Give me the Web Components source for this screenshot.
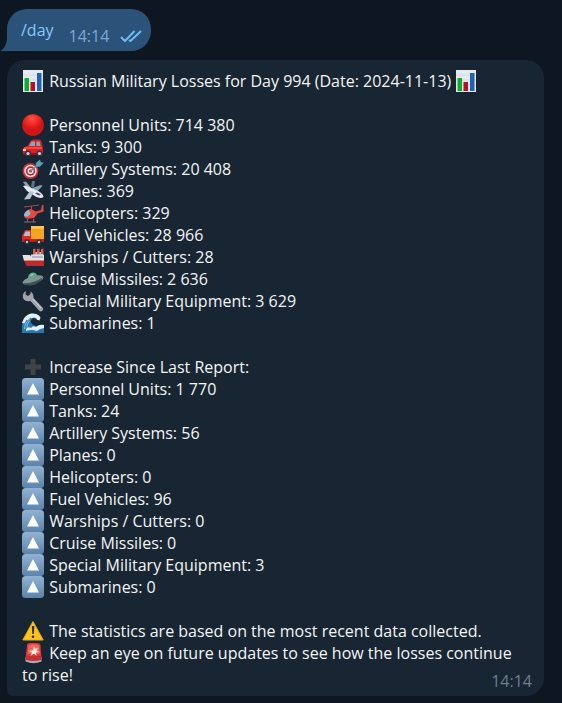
<!DOCTYPE html>
<html lang="en">
<head>
<meta charset="utf-8">
<title>Chat</title>
<style>
html { background: #0e1621; }
body { margin: 0; font-family: "Open Sans", "Noto Sans", sans-serif; font-size: 16px; line-height: 22px; color: #f5f5f5; }
</style>
</head>
<body>
<chat-view>
  <chat-bubble variant="out" time="14:14"><a href="#day">/day</a></chat-bubble>
  <chat-bubble variant="in" time="14:14"><loss-report></loss-report></chat-bubble>
</chat-view>
<script>
const ICONS = {
  chart: `<path fill="#e6e9f2" d="M1 0h20v22H1z"/><path stroke="#c3cbdc" stroke-width=".5" d="M1 5h20M1 10h20M1 15h20"/><path fill="#0cae2b" d="M2.5 8H7v13H2.5z"/><path fill="#b90e23" d="M8.5 12H13v9H8.5z"/><path fill="#1c63b5" d="M15 3h4.5v18H15z"/>`,
  circle: `<defs><radialGradient id="r" cx=".45" cy=".2"><stop stop-color="#ff5144"/><stop offset=".6" stop-color="#ef2722"/><stop offset="1" stop-color="#d41517"/></radialGradient></defs><circle cx="11" cy="11" r="10.8" fill="url(#r)"/>`,
  car: `<path fill="#de1e22" d="M.5 14q0-3 5-4l3-5q1-1.500 3-1.500h5q2.500 0 3 2l1 4.500.5 3v5H1z"/><path fill="#8aa5b8" d="M9.500 5.500H13v4.500H7zM14.500 5.500h3l1 4.500h-4z"/><path fill="#ff7668" d="M2 11.500h18v1H2z"/><path fill="#ffd0a8" d="M1 13h3v2H1z"/><path fill="#8f1219" d="M1 17h20v2H1z"/><circle cx="6" cy="17.500" r="3" fill="#303741"/><circle cx="17.500" cy="17.500" r="3" fill="#303741"/><circle cx="6" cy="17.500" r="1.600" fill="#cbd3d8"/><circle cx="17.500" cy="17.500" r="1.600" fill="#cbd3d8"/>`,
  target: `<circle cx="8.500" cy="13" r="8" fill="#ce2935"/><circle cx="8.500" cy="13" r="6.200" fill="#eee"/><circle cx="8.500" cy="13" r="4.700" fill="#c9222e"/><circle cx="8.500" cy="13" r="3" fill="#eee"/><circle cx="8.500" cy="13" r="1.500" fill="#c9222e"/><path stroke="#5c8c9c" stroke-width="1.600" d="M8.500 13L17 6"/><path fill="#4ba7bd" d="M13.500 5.500l4.500-4 .8 2.700 3 .6-4.200 4.200-3-.5z"/>`,
  plane: `<path fill="#8b9dae" d="M1 2l3-.5 5 6-2 3zM10 8l9-3 1.500 1-6 6z"/><path fill="#e4eaf0" d="M1 6q2-1 5 .5L14 10q7 3 7.500 7-3 2-8-.5L5 11z"/><path fill="#b8c4cf" d="M12 12l-4 7-6 .5 1-1.500 5-7z"/><path fill="#37506a" d="M15 12.500l4 2-2 1-4-2z"/><path fill="#5d7386" d="M10 1h3l-1 7-3-1z"/>`,
  helicopter: `<path stroke="#a84648" stroke-width="1" d="M2 5l15-2M9.500 4v4"/><path fill="#e9473f" d="M2 13q1-5 7-6l5 2.500 5-1.500 1-5h1.500v6.500l-6 2-3 4q-6 2-9.500.5z"/><path fill="#91bad0" d="M2 13q1-4 5-5l1.500 4-2.500 2.500-3.500 0z"/><path stroke="#9b6068" stroke-width="1" fill="none" d="M5.500 16.500V20M11.500 16.500V20M2 20h12"/>`,
  truck: `<path fill="#f2a51f" d="M9 2h13v14H9z"/><path fill="#ffc348" d="M9 2h13v3H9z"/><path fill="#dc2928" d="M3 6h6v12H0v-6z"/><path fill="#abc4cf" d="M3.500 7.500H8V12H1.500z"/><path fill="#c42022" d="M0 15h22v3H0z"/><circle cx="5" cy="18" r="2.600" fill="#292f35"/><circle cx="17" cy="18" r="2.600" fill="#292f35"/><circle cx="5" cy="18" r="1.200" fill="#bdc7ca"/><circle cx="17" cy="18" r="1.200" fill="#bdc7ca"/>`,
  ship: `<path fill="#dbe0e3" d="M9 8.500h13V15H9z"/><path fill="#b9c3c8" d="M11 6h10v3H11z"/><path fill="#d75a52" d="M11 2h2.500v6H11zM15 2h2.500v6H15zM19 2h2.500v6H19z"/><path fill="#262b34" d="M11 1h2.500v2H11zM15 1h2.500v2H15zM19 1h2.500v2H19z"/><path fill="#e7e3df" d="M.5 9H8l2 3.500h12V15H2z"/><path fill="#b92b30" d="M2 14.500h20V20H4.500z"/><path stroke="#6d7d88" stroke-width=".8" d="M10 11h11"/>`,
  ufo: `<ellipse cx="11" cy="12" rx="10.800" ry="4" transform="rotate(-16 11 12)" fill="#7f9290"/><path fill="#3b5352" d="M.8 15q11 1 20.400-6-3 5.500-9 8-8 1.500-11.400-2z"/><path fill="#59a888" d="M6 10q0-5 5-5.500 4 0 4 3.500-4 3-9 2z"/><path fill="#a2e3c4" d="M8 8q1-2.500 4-2.500-1 2-4 2.500z"/>`,
  wrench: `<path fill="#a0a3ac" d="M4 1L3.500 4.500 6 6l2.500-2V1.500q3.500 2 3 6.500l9 9.500q1.500 2-.5 3.500-1.500 1-3-.5L8.500 11Q3 12 1 8 0 3 4 1z"/><path stroke="#d6d7dd" fill="none" d="M10.500 9l8.500 9"/>`,
  wave: `<path fill="#2a78b4" d="M0 21V13Q2 4 8 2q7-1 9.500 4l-2 2-4-2q-3.500 1-2.500 5 3 4 13 3v7z"/><path fill="#e2f1f7" d="M0 11q2-8 9-9.500 7-.5 9.500 4l-1 3-2-.5q-1-3-4-2.500l-2 1-1-1-3 3-1-1-2 4zM4 17q2-3 5-1 2-3 5-1 3-3 8-2v3q-5 1-7 3-6-2-11 0z"/><path stroke="#86c4e1" fill="none" d="M2.500 17Q3 10 8 7M5 16q-.5-4 2.500-7"/>`,
  plus: `<path fill="#414246" d="M8.500 3h5v5.500H19v5h-5.500V19h-5v-5.500H3v-5h5.500z"/>`,
  up: `<defs><linearGradient id="b" x2="0" y2="1"><stop stop-color="#92b2d1"/><stop offset="1" stop-color="#5c83ac"/></linearGradient></defs><rect width="22" height="22" rx="3.500" fill="url(#b)"/><path fill="#fff" d="M11 5L17 16.500H5z"/>`,
  warning: `<path fill="#fbc51e" stroke="#eda913" stroke-linejoin="round" d="M11 1.500L21.200 20H.8z"/><path fill="#352e20" d="M9.800 6h2.500l-.5 8h-1.500z"/><circle cx="11" cy="16.700" r="1.300" fill="#352e20"/>`,
  siren: `<path fill="#d93a34" d="M3.500 16L5 3q0-2 3-2h7q3 0 3.500 2l1 13z"/><path fill="#f0625a" d="M6.500 3q5-1.500 10.500 0l1 9H5.500z"/><path fill="#fff0e8" d="M12 4l1 3 3.500-1.500-2 3.200 3 1.300-3.500.5.5 3.500-2.500-2.500L8.500 14l1.500-3.500L7 9l4-.8z"/><path fill="#a4b0b7" d="M3.500 15.500h16v4q-8 3.500-16 0z"/><path fill="#c92f31" d="M4 14h15v4q-7.500 2-15 0z"/>`
};

class EmojiIcon extends HTMLElement {
  connectedCallback() {
    this.attachShadow({ mode: 'open' }).innerHTML = `<style>
      :host { display: inline-block; width: 22px; height: 22px; margin-right: 1px; vertical-align: top; }
      svg { display: block; width: 100%; height: 100%; }
    </style><svg viewBox="0 0 22 22" fill="none" aria-hidden="true">${ICONS[this.getAttribute('name')]}</svg>`;
  }
}
customElements.define('emoji-icon', EmojiIcon);

class ChatView extends HTMLElement {
  constructor() {
    super();
    this.attachShadow({ mode: 'open' }).innerHTML = `<style>
      :host { display: flex; flex-direction: column; align-items: flex-start; gap: 9px; padding: 9px 18px 7px 7px; }
    </style><slot></slot>`;
  }
}
customElements.define('chat-view', ChatView);

class ChatBubble extends HTMLElement {
  connectedCallback() {
    const out = this.getAttribute('variant') === 'out';
    this.attachShadow({ mode: 'open' }).innerHTML = `<style>
      :host { display: block; position: relative; background: #182533; border-radius: 18px 18px 18px 6px; padding: 10px 15px; }
      :host([variant="out"]) { display: flex; gap: 15px; background: #2b5278; border-radius: 20px 20px 20px 0; padding: 10px 9px 10px 14px; }
      ::slotted(a) { color: #83caff; text-decoration: none; }
      time { position: absolute; right: 12px; bottom: 4px; color: #6d7f8f; }
      :host([variant="out"]) time { position: static; display: flex; align-items: center; gap: 11px; color: #7da8d3; padding-top: 12px; height: 10px; }
      .tail { position: absolute; left: -7px; bottom: 0; width: 7px; height: 12px; }
    </style><slot></slot><time>${this.getAttribute('time')}${out ? `<svg width="22" height="14" viewBox="0 0 22 14" fill="none" stroke="#6fb9f3" stroke-width="2" role="img" aria-label="Read"><path d="M1 8l4 4L14.500 2M9 11l1.500 1L21 2"/></svg>` : ''}</time>
    ${out ? `<svg class="tail" viewBox="0 0 7 12" aria-hidden="true"><path fill="#2b5278" d="M7 0v12H0q6-3 7-12z"/></svg>` : ''}`;
  }
}
customElements.define('chat-bubble', ChatBubble);

class LossReport extends HTMLElement {
  connectedCallback() {
    const row = ([icon, text]) => `<li><emoji-icon name="${icon}"></emoji-icon> ${text}</li>`;
    const totals = [['circle', 'Personnel Units: 714 380'], ['car', 'Tanks: 9 300'], ['target', 'Artillery Systems: 20 408'],
      ['plane', 'Planes: 369'], ['helicopter', 'Helicopters: 329'], ['truck', 'Fuel Vehicles: 28 966'], ['ship', 'Warships / Cutters: 28'],
      ['ufo', 'Cruise Missiles: 2 636'], ['wrench', 'Special Military Equipment: 3 629'], ['wave', 'Submarines: 1']];
    const gains = ['Personnel Units: 1 770', 'Tanks: 24', 'Artillery Systems: 56', 'Planes: 0', 'Helicopters: 0', 'Fuel Vehicles: 96',
      'Warships / Cutters: 0', 'Cruise Missiles: 0', 'Special Military Equipment: 3', 'Submarines: 0'].map(t => ['up', t]);
    this.attachShadow({ mode: 'open' }).innerHTML = `<style>
      :host { display: flex; flex-direction: column; gap: 22px; }
      p, ul { margin: 0; padding: 0; list-style: none; }
    </style>
    <p><emoji-icon name="chart"></emoji-icon> Russian Military Losses for Day 994 (Date: 2024-11-13) <emoji-icon name="chart"></emoji-icon></p>
    <ul>${totals.map(row).join('')}</ul>
    <div><p><emoji-icon name="plus"></emoji-icon> Increase Since Last Report:</p><ul>${gains.map(row).join('')}</ul></div>
    <div><p><emoji-icon name="warning"></emoji-icon> The statistics are based on the most recent data collected.</p>
    <p><emoji-icon name="siren"></emoji-icon> Keep an eye on future updates to see how the losses continue <span>to rise!</span></p></div>`;
  }
}
customElements.define('loss-report', LossReport);
</script>
</body>
</html>
